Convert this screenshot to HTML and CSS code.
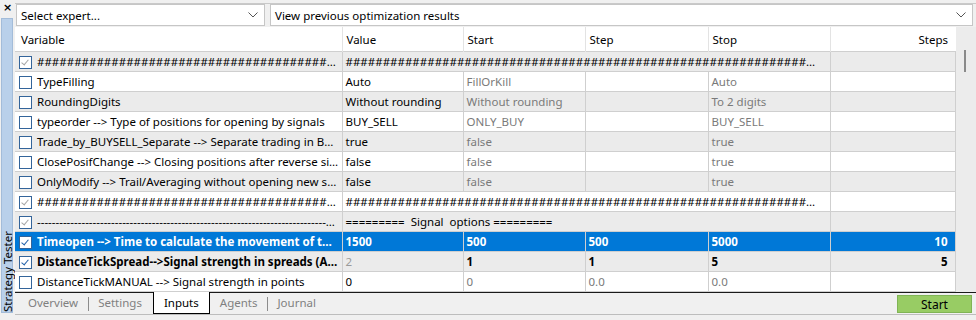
FILE: index.html
```html
<!DOCTYPE html>
<html lang="en">
<head>
    <meta charset="UTF-8">
    <title>Strategy Tester - Inputs</title>
    <link rel="stylesheet" href="styles.css">
</head>
<body>
    <div class="app">
        <div class="side">
            <div class="close">×</div>
            <div class="side-bar"><span>Strategy Tester</span></div>
        </div>

        <div class="main">
            <div class="toolbar">
                <div class="combo combo-expert">
                    <span>Select expert...</span>
                    <svg class="chev" width="10" height="6" viewBox="0 0 10 6"><polyline points="0.5,0.5 5,5 9.5,0.5" fill="none" stroke="#555" stroke-width="1"/></svg>
                </div>
                <div class="combo combo-results">
                    <span>View previous optimization results</span>
                    <svg class="chev" width="10" height="6" viewBox="0 0 10 6"><polyline points="0.5,0.5 5,5 9.5,0.5" fill="none" stroke="#555" stroke-width="1"/></svg>
                </div>
            </div>

            <div class="grid-area">
                <table class="inputs">
                    <colgroup>
                        <col class="c-var">
                        <col class="c-val">
                        <col class="c-start">
                        <col class="c-step">
                        <col class="c-stop">
                        <col class="c-steps">
                    </colgroup>
                    <thead>
                        <tr>
                            <th>Variable</th>
                            <th>Value</th>
                            <th>Start</th>
                            <th>Step</th>
                            <th>Stop</th>
                            <th class="num">Steps</th>
                        </tr>
                    </thead>
                    <tbody>
                        <tr class="odd">
                            <td><span class="cb on dim"></span>##############################################################</td>
                            <td colspan="4" class="hash">############################################################################################</td>
                            <td></td>
                        </tr>
                        <tr>
                            <td><span class="cb"></span>TypeFilling</td>
                            <td>Auto</td>
                            <td class="opt">FillOrKill</td>
                            <td></td>
                            <td class="opt">Auto</td>
                            <td></td>
                        </tr>
                        <tr class="odd">
                            <td><span class="cb"></span>RoundingDigits</td>
                            <td>Without rounding</td>
                            <td class="opt">Without rounding</td>
                            <td></td>
                            <td class="opt">To 2 digits</td>
                            <td></td>
                        </tr>
                        <tr>
                            <td><span class="cb"></span>typeorder --&gt; Type of positions for opening by signals</td>
                            <td>BUY_SELL</td>
                            <td class="opt">ONLY_BUY</td>
                            <td></td>
                            <td class="opt">BUY_SELL</td>
                            <td></td>
                        </tr>
                        <tr class="odd">
                            <td><span class="cb"></span>Trade_by_BUYSELL_Separate --&gt; Separate trading in BUY and SELL</td>
                            <td>true</td>
                            <td class="opt">false</td>
                            <td></td>
                            <td class="opt">true</td>
                            <td></td>
                        </tr>
                        <tr>
                            <td><span class="cb"></span>ClosePosifChange --&gt; Closing positions after reverse signal</td>
                            <td>false</td>
                            <td class="opt">false</td>
                            <td></td>
                            <td class="opt">true</td>
                            <td></td>
                        </tr>
                        <tr class="odd">
                            <td><span class="cb"></span>OnlyModify --&gt; Trail/Averaging without opening new signals</td>
                            <td>false</td>
                            <td class="opt">false</td>
                            <td></td>
                            <td class="opt">true</td>
                            <td></td>
                        </tr>
                        <tr>
                            <td><span class="cb on dim"></span>##############################################################</td>
                            <td colspan="4" class="hash">############################################################################################</td>
                            <td></td>
                        </tr>
                        <tr class="odd">
                            <td><span class="cb on dim"></span>-------------------------------------------------------------------------------------------</td>
                            <td colspan="4">=========&nbsp; Signal&nbsp; options =========</td>
                            <td></td>
                        </tr>
                        <tr class="selected">
                            <td><span class="cb on"></span>Timeopen --&gt; Time to calculate the movement of the price</td>
                            <td>1500</td>
                            <td>500</td>
                            <td>500</td>
                            <td>5000</td>
                            <td class="num">10</td>
                        </tr>
                        <tr class="odd bold">
                            <td><span class="cb on"></span>DistanceTickSpread--&gt;Signal strength in spreads (Auto)</td>
                            <td class="opt plain">2</td>
                            <td>1</td>
                            <td>1</td>
                            <td>5</td>
                            <td class="num">5</td>
                        </tr>
                        <tr>
                            <td><span class="cb"></span>DistanceTickMANUAL --&gt; Signal strength in points</td>
                            <td>0</td>
                            <td class="opt">0</td>
                            <td class="opt">0.0</td>
                            <td class="opt">0.0</td>
                            <td></td>
                        </tr>
                    </tbody>
                </table>
                <div class="scroll">
                    <div class="thumb"></div>
                </div>
            </div>

            <div class="tabs">
                <span class="tab first">Overview</span>
                <span class="sep"></span>
                <span class="tab">Settings</span>
                <span class="tab active">Inputs</span>
                <span class="tab after">Agents</span>
                <span class="sep"></span>
                <span class="tab">Journal</span>
                <button class="start">Start</button>
            </div>
        </div>
    </div>
</body>
</html>
```

FILE: styles.css
```css
body {
    margin: 0;
    background-color: #f0f0f0;
    font-family: "Noto Sans", "Liberation Sans", sans-serif;
    font-size: 11.5px;
    color: #000;
}
.app {
    display: flex;
    width: 976px;
    height: 320px;
    overflow: hidden;
}

/* left docked strip */
.side {
    width: 15px;
    display: flex;
    flex-direction: column;
}
.close {
    height: 18px;
    font-family: "DejaVu Sans", sans-serif;
    font-weight: bold;
    font-size: 11px;
    line-height: 16px;
    padding-left: 3px;
}
.side-bar {
    height: 295px;
    width: 12px;
    margin-left: 1px;
    background-color: #b9d0ea;
    border: 1px solid #a3bcd9;
    box-sizing: border-box;
    display: flex;
    flex-direction: column;
    justify-content: flex-end;
    align-items: center;
}
.side-bar span {
    writing-mode: vertical-rl;
    transform: rotate(180deg);
    white-space: nowrap;
    font-size: 11.5px;
    line-height: 11px;
}

.main {
    flex: 1;
    display: flex;
    flex-direction: column;
    border-top: 1px solid #c9c9c9;
    margin-top: 3px;
}

/* combos */
.toolbar {
    display: flex;
    gap: 5px;
    height: 23px;
    padding: 0 3px 0 1px;
}
.combo {
    height: 22px;
    box-sizing: border-box;
    background-color: #fff;
    border: 1px solid #c6c6c6;
    display: flex;
    align-items: center;
    justify-content: space-between;
    padding: 0 6px 0 4px;
}
.combo-expert {
    width: 249px;
}
.combo-results {
    flex: 1;
}

/* table */
.grid-area {
    display: flex;
    height: 265px;
}
.inputs {
    width: 940px;
    table-layout: fixed;
    border-collapse: collapse;
    background-color: #fff;
}
.c-var { width: 327px; }
.c-val { width: 121px; }
.c-start { width: 122px; }
.c-step { width: 123px; }
.c-stop { width: 122px; }
.c-steps { width: 125px; }
th {
    height: 24px;
    font-weight: normal;
    text-align: left;
    padding: 0 4px;
    border-left: 1px solid #e3e3e3;
    background-color: #fff;
}
th:first-child {
    padding-left: 6px;
    border-left: none;
}
td {
    height: 19px;
    padding: 0 3px;
    white-space: nowrap;
    overflow: hidden;
    text-overflow: ellipsis;
    border: 1px solid #cfcfcf;
    border-top: none;
}
td:first-child {
    padding-left: 3px;
    border-left: none;
}
tbody tr:first-child td {
    border-top: 1px solid #cfcfcf;
}
tr.odd td {
    background-color: #ebebeb;
}
.num {
    text-align: right;
    padding-right: 7px;
}
.opt {
    color: #7a7a7a;
}
.hash {
    padding-right: 10px;
}
tr.selected td {
    background-color: #0078d7;
    color: #fff;
    font-weight: bold;
}
tr.bold td {
    font-weight: bold;
}
tr.bold td.plain {
    font-weight: normal;
    color: #9a9a9a;
}

/* checkbox */
.cb {
    display: inline-block;
    width: 11px;
    height: 11px;
    border: 1px solid #33649a;
    background-color: #fff;
    vertical-align: -3px;
    margin: 0 5px 0 1px;
    position: relative;
}
.cb.on::after {
    content: "";
    position: absolute;
    left: 3px;
    top: 1px;
    width: 3px;
    height: 6px;
    border: solid #1f5fa8;
    border-width: 0 1.5px 1.5px 0;
    transform: rotate(40deg);
}
.cb.dim::after {
    border-color: #a5a5a5;
}

/* scrollbar */
.scroll {
    flex: 1;
    background-color: #ececec;
    position: relative;
}
.thumb {
    position: absolute;
    left: 8px;
    top: 23px;
    width: 2px;
    height: 22px;
    background-color: #8a8a8a;
}

/* bottom tabs */
.tabs {
    height: 21px;
    border-top: 1px solid #1a1a1a;
    border-bottom: 1px solid #bdbdbd;
    display: flex;
    align-items: stretch;
}
.tab {
    color: #808080;
    padding: 0 10px 0 9px;
    line-height: 19px;
    font-size: 11.5px;
}
.tab.first {
    padding-left: 13px;
}
.tab.after {
    padding-left: 10px;
}
.sep {
    width: 1px;
    background-color: #8c8c8c;
    margin: 4px 0 3px;
}
.tab.active {
    color: #000;
    background-color: #fff;
    border: 1px solid #000;
    border-top: none;
    margin: -1px 0 0 1px;
    padding: 1px 10px 0 10px;
}
.start {
    margin: 2px 4px 0 auto;
    width: 75px;
    height: 18px;
    background-color: #98cc64;
    border: 1px solid #80b455;
    font-family: inherit;
    font-size: 12px;
    color: #000;
    padding: 0;
}
```
